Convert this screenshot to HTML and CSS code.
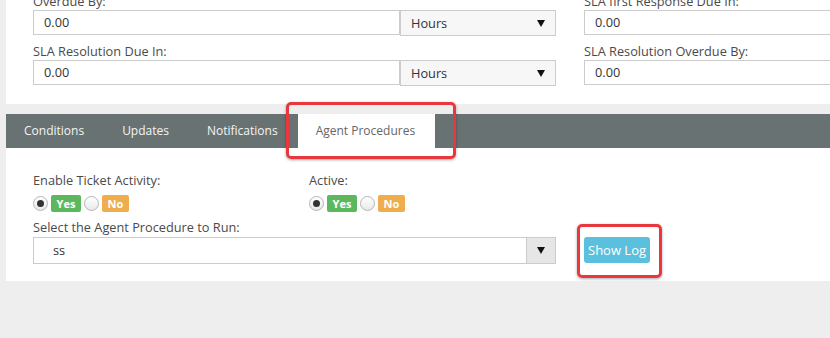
FILE: index.html
```html
<!DOCTYPE html>
<html lang="en">
<head>
  <meta charset="UTF-8" />
  <title>Ticket SLA - Agent Procedures</title>
  <link rel="stylesheet" href="styles.css">
</head>
<body>

<div class="page">
  <section class="panel panel-top">
    <div class="sla-grid">
      <div class="field">
        <label>Overdue By:</label>
        <div class="combo">
          <div class="box num">0.00</div>
          <div class="box unit">Hours<span class="caret"></span></div>
        </div>
      </div>
      <div class="field">
        <label>SLA first Response Due In:</label>
        <div class="box num wide">0.00</div>
      </div>
      <div class="field">
        <label>SLA Resolution Due In:</label>
        <div class="combo">
          <div class="box num">0.00</div>
          <div class="box unit">Hours<span class="caret"></span></div>
        </div>
      </div>
      <div class="field">
        <label>SLA Resolution Overdue By:</label>
        <div class="box num wide">0.00</div>
      </div>
    </div>
  </section>

  <nav class="tabs">
    <div class="tab">Conditions</div>
    <div class="tab">Updates</div>
    <div class="tab">Notifications</div>
    <div class="tab active">Agent Procedures<span class="mark mark-tab"></span></div>
  </nav>

  <section class="panel panel-bottom">
    <div class="opts">
      <div class="opt">
        <label>Enable Ticket Activity:</label>
        <div class="choice">
          <span class="radio on"></span><span class="badge yes">Yes</span>
          <span class="radio"></span><span class="badge no">No</span>
        </div>
      </div>
      <div class="opt">
        <label>Active:</label>
        <div class="choice">
          <span class="radio on"></span><span class="badge yes">Yes</span>
          <span class="radio"></span><span class="badge no">No</span>
        </div>
      </div>
    </div>

    <label class="run-label">Select the Agent Procedure to Run:</label>
    <div class="run-row">
      <div class="proc">
        <div class="proc-value">ss</div>
        <div class="proc-caret"><span class="caret"></span></div>
      </div>
      <div class="btn">Show Log<span class="mark mark-btn"></span></div>
    </div>
  </section>
</div>

</body>
</html>
```

FILE: styles.css
```css
body {
  margin: 0;
  background: #eeeeee;
  font-family: 'Open Sans', sans-serif;
  font-size: 12.75px;
  color: #4a4a4a;
  overflow: hidden;
}

.page {
  margin-left: 6px;
}

.panel {
  background: #fff;
  padding-left: 27px;
}

label {
  display: block;
  line-height: 17px;
  white-space: nowrap;
}

/* SLA fields */
.panel-top {
  padding-bottom: 18px;
}

.sla-grid {
  display: grid;
  grid-template-columns: 523px 260px;
  column-gap: 28px;
  row-gap: 7px;
  margin-top: -7px;
}

.combo {
  display: flex;
}

.box {
  box-sizing: border-box;
  height: 25px;
  line-height: 23px;
  border: 1px solid #ccc;
  padding-left: 10px;
  color: #333;
  background: #fff;
}

.combo .num {
  width: 367px;
}

.num.wide {
  width: 260px;
}

.unit {
  width: 156px;
  height: 26px;
  background: #f7f7f7;
  display: flex;
  align-items: center;
  justify-content: space-between;
  padding-right: 10px;
}

.caret {
  display: inline-block;
  width: 0;
  height: 0;
  border-left: 4px solid transparent;
  border-right: 4px solid transparent;
  border-top: 7px solid #111;
}

/* Tabs */
.tabs {
  display: flex;
  background: #687272;
  height: 34px;
  margin-top: 10px;
}

.tab {
  padding: 0 20px 0 18px;
  line-height: 34px;
  font-size: 12px;
  color: #f4f4f4;
  white-space: nowrap;
}

.tab.active {
  position: relative;
  background: #fff;
  color: #666;
}

/* Red highlight boxes */
.mark {
  position: absolute;
  border: 3px solid #e8383d;
  border-radius: 5px;
  box-shadow: 0 1px 3px rgba(0,0,0,0.35);
  pointer-events: none;
}

.mark-tab {
  left: -12px;
  right: -21px;
  top: -12px;
  bottom: -11px;
}

.mark-btn {
  left: -7px;
  right: -12px;
  top: -13px;
  bottom: -15px;
}

/* Agent procedure panel */
.panel-bottom {
  padding-top: 24px;
  padding-bottom: 17px;
}

.opts {
  display: grid;
  grid-template-columns: 276px auto;
}

.choice {
  display: flex;
  align-items: center;
  gap: 3px;
  height: 17px;
  margin-top: 6px;
}

.radio {
  position: relative;
  box-sizing: border-box;
  width: 15px;
  height: 15px;
  border-radius: 50%;
  border: 1px solid #b5b5b5;
  background: linear-gradient(#fff, #e9e9e9);
}

.radio.on::after {
  content: '';
  position: absolute;
  left: 3px;
  top: 3px;
  width: 7px;
  height: 7px;
  border-radius: 50%;
  background: #333;
}

.badge {
  height: 17px;
  line-height: 17px;
  font-size: 11px;
  font-weight: bold;
  color: #fff;
  text-align: center;
  border-radius: 2px;
}

.badge.yes {
  width: 30px;
  background: #5cb85c;
}

.badge.no {
  width: 27px;
  background: #f0ad4e;
}

.run-label {
  margin-top: 7px;
}

.run-row {
  display: flex;
  gap: 28px;
  margin-top: 1px;
}

.proc {
  box-sizing: border-box;
  width: 523px;
  height: 27px;
  border: 1px solid #ccc;
  display: flex;
}

.proc-value {
  flex: 1;
  padding-left: 19px;
  line-height: 25px;
  color: #333;
}

.proc-caret {
  width: 28px;
  background: #e6e6e6;
  border-left: 1px solid #ccc;
  display: flex;
  align-items: center;
  justify-content: center;
}

.btn {
  position: relative;
  height: 26px;
  line-height: 26px;
  padding: 0 4px;
  font-size: 13px;
  background: #5bc0de;
  color: #fff;
  border-radius: 3px;
  white-space: nowrap;
}
```
